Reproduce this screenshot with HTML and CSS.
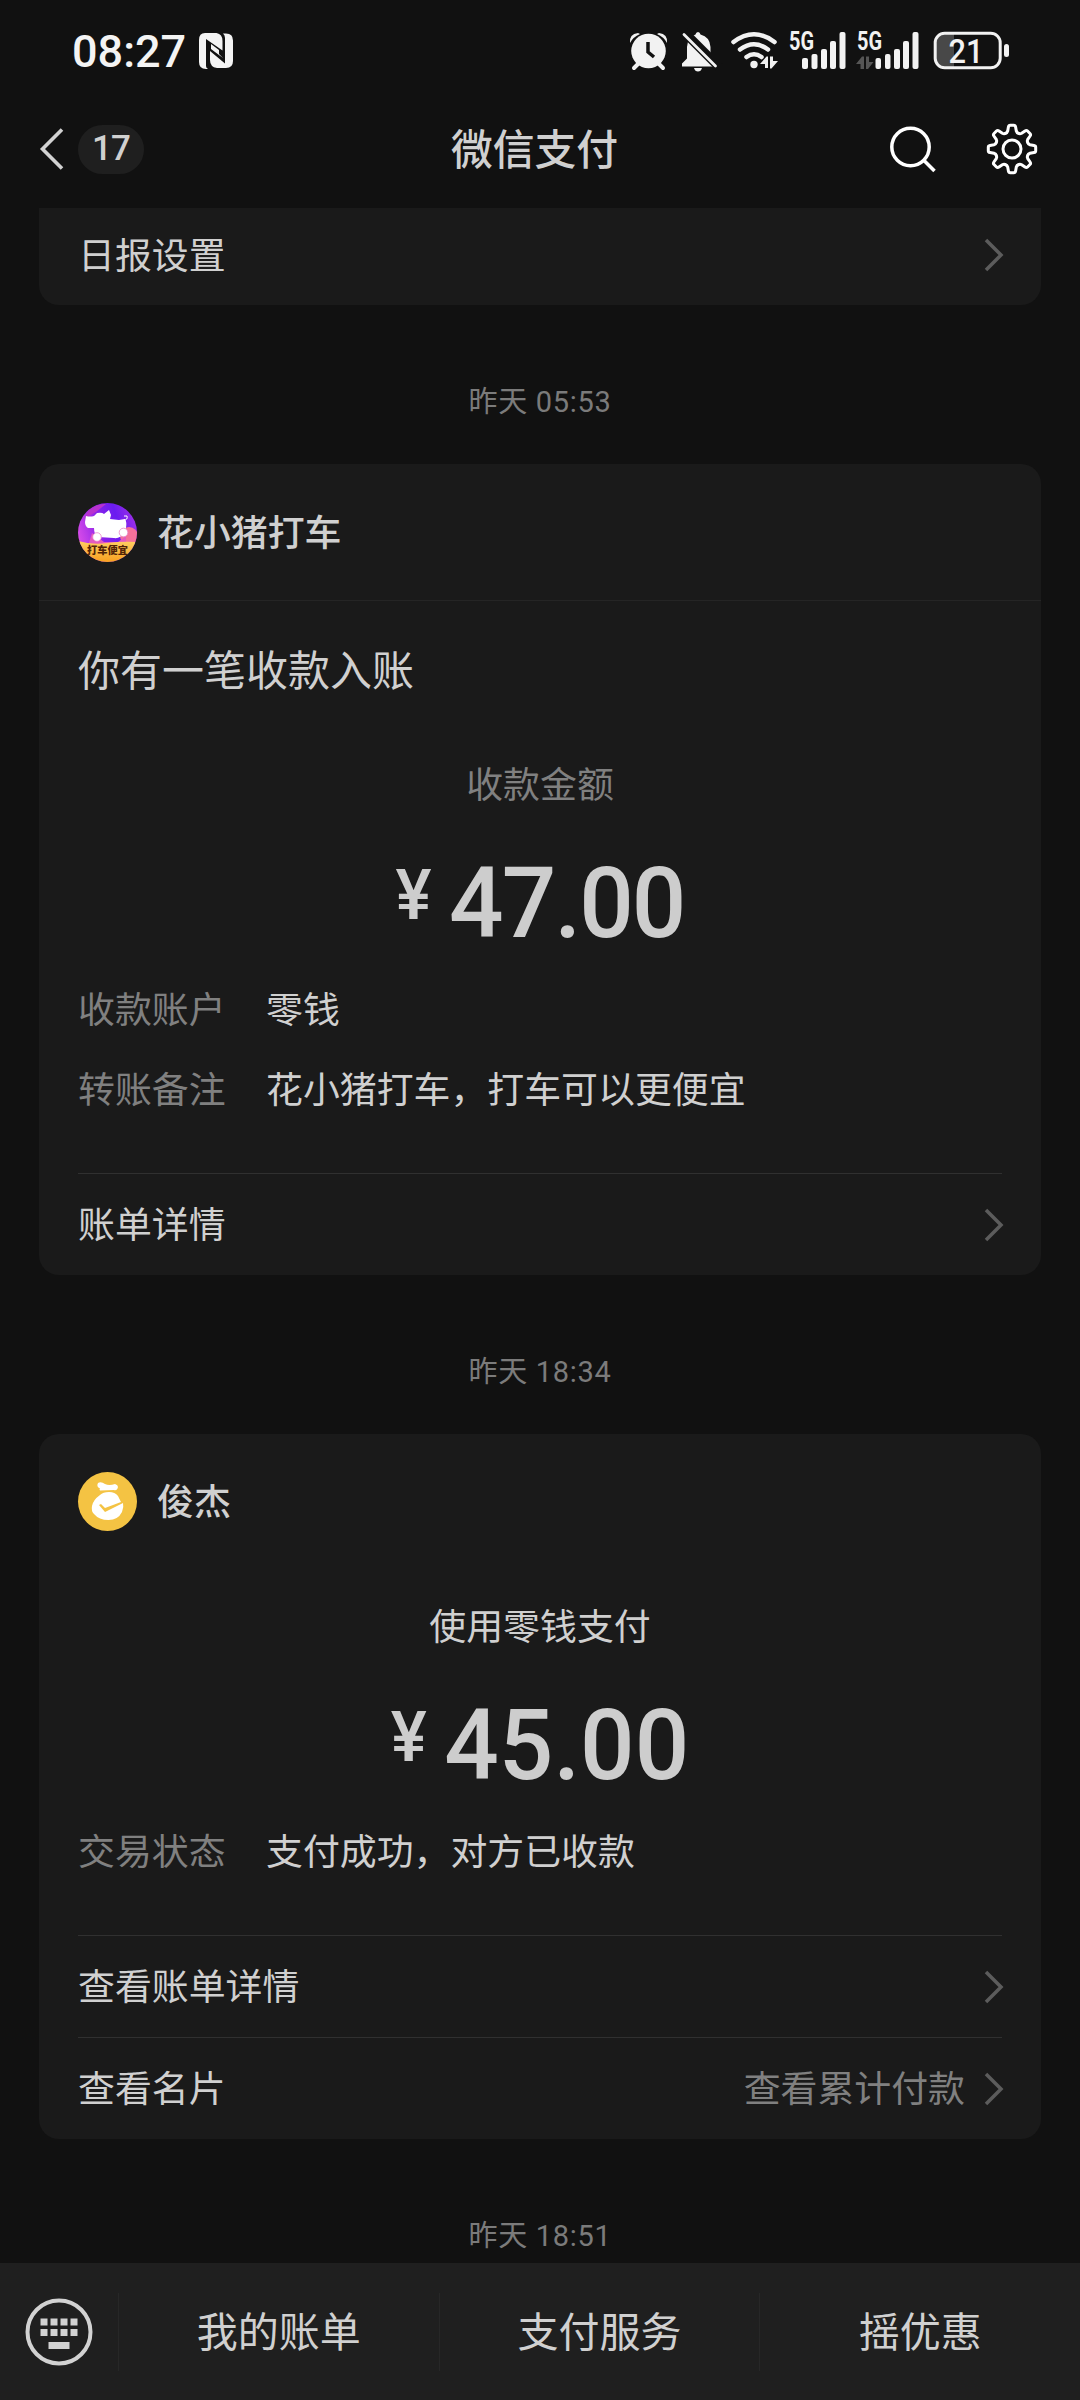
FILE: index.html
```html
<!DOCTYPE html>
<html lang="zh-CN">
<head>
<meta charset="utf-8">
<title>微信支付</title>
<link rel="stylesheet" href="styles.css">
</head>
<body>
<div class="screen">
  <div class="status">
    <span class="clock">08:27</span>
    <svg class="nfc" width="36" height="36" viewBox="198 34 36 36">
      <path fill="#f4f4f4" d="M205 34h11.500q6 1 6 8v9.500L206 40V67q0 2 2 3h-2q-7 0-7-7V41q0-7 6-7z"/>
      <path fill="#f4f4f4" d="M223 34.500h3q7 0 7 7V62q0 7-7 7h-9q-7-1-7-8v-9l15 12.500V39q0-3-2-4.500z"/>
      <path fill="#f4f4f4" d="M211 45l8 6v4l4 4-12-9z"/>
    </svg>
    <div class="status-icons">
      <svg width="42" height="40" viewBox="628 31 42 40">
        <g stroke="#f2f2f2" stroke-width="4" stroke-linecap="round"><path d="M638 64l-4 4M659 64l4 4"/></g>
        <path fill="#f2f2f2" d="M630 43q-1-9 8-10l2 1q-7 3-10 9zM667 43q1-9-8-10l-2 1q7 3 10 9z"/>
        <circle cx="648.500" cy="51" r="17.300" fill="#f2f2f2"/>
        <path d="M648 42v10l6 5" fill="none" stroke="#111" stroke-width="3.500"/>
      </svg>
      <svg width="38" height="40" viewBox="680 31 38 40">
        <path fill="#f2f2f2" d="M698 32q2 0 2.500 2.500Q710 37 710.500 47v8l6 8.500v3H682v-3l5-5V47q.500-10 8.500-12.500Q696 32 698 32zM694 68h8q-1 3.500-4 3.500t-4-3.500z"/>
        <path d="M684 32l35 35" stroke="#111" stroke-width="9"/>
        <path d="M684 34.500l31.500 31.500" stroke="#f2f2f2" stroke-width="2.800" stroke-linecap="round"/>
      </svg>
      <svg width="51" height="40" viewBox="728 31 51 40">
        <g fill="none" stroke="#f2f2f2" stroke-width="4.500" stroke-linecap="round"><path d="M733.500 42q20.500-15.500 41 0M740 49.500q14-10.500 28 0M746.500 57q7.500-5.500 15 0"/></g>
        <circle cx="754" cy="64.500" r="3.700" fill="#f2f2f2"/>
        <path fill="#f2f2f2" d="M760 64l6.500-7.500h1.500V68h-3v-4zM770 56.500h3V61h5l-6.500 7.500H770z"/>
      </svg>
      <svg width="57" height="40" viewBox="789 31 57 40">
        <text class="net" x="789" y="50" textLength="25" lengthAdjust="spacingAndGlyphs">5G</text>
        <g fill="#f2f2f2"><rect x="802" y="58" width="6" height="11" rx="2"/><rect x="811.500" y="54" width="6" height="15" rx="2"/><rect x="821" y="49" width="6" height="20" rx="2"/><rect x="830" y="41" width="6" height="28" rx="2"/><rect x="839.500" y="32" width="6" height="37" rx="2"/></g>
      </svg>
      <svg width="63" height="40" viewBox="856 31 63 40">
        <text class="net" x="857" y="50" textLength="25" lengthAdjust="spacingAndGlyphs">5G</text>
        <path fill="#555" d="M856 64l6-7.500h2V69h-3.500v-5zM866 56.500h3V62h4.500L868 69h-2z"/>
        <g fill="#f2f2f2"><rect x="875.500" y="58" width="5.500" height="11" rx="2"/><rect x="885" y="54" width="5.500" height="15" rx="2"/><rect x="894" y="49" width="6" height="20" rx="2"/><rect x="903" y="41" width="6" height="28" rx="2"/><rect x="912.500" y="32" width="6" height="37" rx="2"/></g>
      </svg>
      <svg width="81" height="40" viewBox="929 31 81 40">
        <path fill="#484848" d="M946 34h8v34h-8q-10 0-10-10V44q0-10 10-10z"/>
        <rect x="935.200" y="33.200" width="65" height="34.600" rx="9.500" fill="none" stroke="#f2f2f2" stroke-width="3"/>
        <rect x="1004" y="44" width="5" height="13" rx="2.500" fill="#f2f2f2"/>
        <text class="level" x="948.500" y="63" textLength="35" lengthAdjust="spacingAndGlyphs">21</text>
      </svg>
    </div>
  </div>

  <div class="nav">
    <div class="nav-left">
      <svg width="26" height="44" viewBox="0 0 26 44"><path d="M23 2.500L3.500 22 23 41.500" fill="none" stroke="#d2d2d2" stroke-width="3.600"/></svg>
      <span class="badge">17</span>
    </div>
    <div class="title">微信支付</div>
    <div class="nav-right">
      <svg width="48" height="52" viewBox="888 123 48 52"><circle cx="910.500" cy="147" r="18.700" fill="none" stroke="#fff" stroke-width="3.500"/><path d="M923.500 160l11 11" stroke="#fff" stroke-width="3.500"/></svg>
      <svg width="52" height="52" viewBox="-26 -26 52 52">
        <defs><path id="tooth" d="M-6.500-15.700Q-4.900-16-4.300-18L-3.600-22Q-3.300-23.700-1.700-23.700H1.700Q3.300-23.700 3.600-22L4.300-18Q4.900-16 6.500-15.700"/></defs>
        <g fill="none" stroke="#fff" stroke-width="3" stroke-linecap="round">
          <use href="#tooth"/><use href="#tooth" transform="rotate(45)"/><use href="#tooth" transform="rotate(90)"/><use href="#tooth" transform="rotate(135)"/><use href="#tooth" transform="rotate(180)"/><use href="#tooth" transform="rotate(225)"/><use href="#tooth" transform="rotate(270)"/><use href="#tooth" transform="rotate(315)"/>
          <circle r="9"/>
        </g>
      </svg>
    </div>
  </div>

  <div class="feed">
    <div class="card card-cut">
      <div class="link first"><span>日报设置</span><svg class="chev" width="20" height="34" viewBox="0 0 20 34"><path d="M3 2l15 15L3 32"/></svg></div>
    </div>

    <div class="time">昨天 05:53</div>

    <div class="card">
      <div class="head lined">
        <svg class="avatar" width="59" height="59" viewBox="0 0 59 59">
          <defs>
            <linearGradient id="sky" x1="0" y1="0.600" x2="1" y2="0.300"><stop offset="0" stop-color="#d94de8"/><stop offset="0.400" stop-color="#8a22ea"/><stop offset="0.700" stop-color="#6a1cf0"/><stop offset="1" stop-color="#a030e8"/></linearGradient>
            <linearGradient id="gold" x1="0" y1="0" x2="0" y2="1"><stop offset="0" stop-color="#ffd062"/><stop offset="1" stop-color="#f8a020"/></linearGradient>
            <clipPath id="round"><circle cx="29.500" cy="29.500" r="29.500"/></clipPath>
          </defs>
          <g clip-path="url(#round)">
            <rect width="59" height="59" fill="url(#sky)"/>
            <path fill="#b832cf" d="M10 8Q18 0 28 1L18 9 6 16z"/>
            <circle cx="51" cy="33" r="9" fill="#f4719a"/>
            <path fill="#e45bc0" d="M14 30l12 9h14l8-6v10H10z"/>
            <path fill="url(#gold)" d="M0 38q14 4 29 2t30-1v20H0z"/>
            <path fill="#fff" d="M8 13q4 1 8 0l3-3q5-1 7 1l5-4 2 5-1 4 9 1 6-1q2 3 1 9l-2 5q-4 6-10 5l-16-1q-4-2-4-9l-6 0q-3-2-3-6z"/>
            <path d="M46 17q4 0 3-4h-3" fill="none" stroke="#fff" stroke-width="1"/>
            <g fill="#fff" stroke="#e987ca" stroke-width="0.800"><circle cx="19" cy="34" r="4.300"/><circle cx="45.500" cy="29.500" r="4.300"/></g>
          </g>
          <text class="slogan" x="9" y="51" textLength="41">打车便宜</text>
        </svg>
        <span>花小猪打车</span>
      </div>
      <div class="heading">你有一笔收款入账</div>
      <div class="label dim after-heading">收款金额</div>
      <div class="amount"><span class="yen">¥</span><span class="sum tight">47.00</span></div>
      <dl class="info">
        <dt>收款账户</dt><dd>零钱</dd>
        <dt>转账备注</dt><dd>花小猪打车，打车可以更便宜</dd>
      </dl>
      <div class="links">
        <div class="link"><span>账单详情</span><svg class="chev" width="20" height="34" viewBox="0 0 20 34"><path d="M3 2l15 15L3 32"/></svg></div>
      </div>
    </div>

    <div class="time">昨天 18:34</div>

    <div class="card">
      <div class="head">
        <svg class="avatar" width="59" height="59" viewBox="0 0 59 59">
          <circle cx="29.500" cy="29.500" r="29.500" fill="#f4c343"/>
          <path fill="#fff" d="M20 11q3-2 7 1 4 2 10 0 3 1 3 3-1 4-4 3l-14 0.500q-1-1 0-2-4-2-2-5.500z"/>
          <path fill="#fff" d="M22 23q3-3 9-3t9 4l3 6-16 6-4-4-2 1 6 7 18-9q1 4-1 9-4 8-13.500 8T16 42q-3-3-2-8 1-6 8-11z"/>
        </svg>
        <span>俊杰</span>
      </div>
      <div class="label after-head">使用零钱支付</div>
      <div class="amount"><span class="yen">¥</span><span class="sum">45.00</span></div>
      <dl class="info">
        <dt>交易状态</dt><dd>支付成功，对方已收款</dd>
      </dl>
      <div class="links">
        <div class="link"><span>查看账单详情</span><svg class="chev" width="20" height="34" viewBox="0 0 20 34"><path d="M3 2l15 15L3 32"/></svg></div>
        <div class="link"><span>查看名片</span><span class="extra">查看累计付款</span><svg class="chev" width="20" height="34" viewBox="0 0 20 34"><path d="M3 2l15 15L3 32"/></svg></div>
      </div>
    </div>

    <div class="time">昨天 18:51</div>
  </div>

  <div class="menu">
    <div class="keyboard">
      <svg width="68" height="70" viewBox="0 0 68 70">
        <circle cx="34" cy="35" r="31.500" fill="none" stroke="#d2d2d2" stroke-width="4"/>
        <g fill="#d2d2d2"><path d="M15.500 21.500h7v7h-7zM25.500 21.500h7v7h-7zM35.500 21.500h7v7h-7zM45.500 21.500h7v7h-7zM15.500 32h7v7h-7zM25.500 32h7v7h-7zM35.500 32h7v7h-7zM45.500 32h7v7h-7zM23.500 45h21v7h-21z"/></g>
      </svg>
    </div>
    <div class="item">我的账单</div>
    <div class="item">支付服务</div>
    <div class="item">摇优惠</div>
  </div>
</div>
</body>
</html>
```
FILE: styles.css
```css
* { box-sizing: border-box; }
body {
  margin: 0;
  background: #111;
  color: #d0d0d0;
  font-family: Roboto, "Noto Sans CJK SC", sans-serif;
  font-size: 36.9px;
}
svg { display: block; flex: none; overflow: visible; }
.screen {
  width: 1080px;
  height: 2400px;
  display: flex;
  flex-direction: column;
  overflow: hidden;
}

/* system status bar */
.status {
  height: 102px;
  display: flex;
  align-items: center;
  padding: 0 70px 0 72px;
}
.clock {
  width: 126px;
  font-size: 45px;
  font-weight: 500;
  color: #f4f4f4;
  white-space: nowrap;
}
.status-icons { display: flex; gap: 10px; margin-left: auto; }
.net { font-size: 25px; font-weight: 700; fill: #f2f2f2; }
.level { font-size: 34px; font-weight: 500; fill: #f2f2f2; }

/* title bar */
.nav {
  height: 106px;
  padding: 0 42px 12px 39px;
  display: grid;
  grid-template-columns: 1fr auto 1fr;
  align-items: center;
}
.nav-left { display: flex; align-items: center; gap: 13px; }
.badge {
  width: 66px;
  height: 49px;
  border-radius: 25px;
  background: #1f1f1f;
  font-size: 35px;
  font-weight: 500;
  letter-spacing: -1px;
  line-height: 48px;
  text-align: center;
}
.title {
  font-size: 41.8px;
  font-weight: 500;
  line-height: 60px;
  padding-top: 3px;
  margin-right: 8px;
}
.nav-right { display: flex; justify-content: flex-end; align-items: center; gap: 50px; }

/* message feed */
.feed { flex: 1; min-height: 0; overflow: hidden; padding: 0 39px; }
.card { background: #1a1a1a; border-radius: 20px; }
.card-cut { border-radius: 0 0 20px 20px; padding: 0 39px; }
.time {
  padding: 77px 0 42px;
  font-size: 29px;
  line-height: 40px;
  letter-spacing: 0.7px;
  color: #7b7b7b;
  text-align: center;
}
.head {
  height: 136px;
  padding: 0 39px 1px;
  display: flex;
  align-items: center;
  gap: 20px;
  font-weight: 500;
  line-height: 50px;
}
.head span, .link span { padding-top: 3px; }
.head.lined { height: 137px; padding-bottom: 0; border-bottom: 1px solid #252525; }
.slogan { font-size: 10.200px; font-weight: 900; fill: #512407; }
.heading { padding: 41px 39px 0; font-size: 42px; line-height: 60px; }
.label { line-height: 50px; text-align: center; }
.dim { color: #808080; }
.after-heading { margin-top: 59px; }
.after-head { margin-top: 33px; }
.amount {
  margin-top: 42px;
  height: 100px;
  display: flex;
  justify-content: center;
  align-items: flex-start;
  gap: 18px;
  font-weight: 500;
  color: #cdcdcd;
  transform: scaleX(0.97);
}
.sum { font-size: 99px; line-height: 100px; }
.sum.tight { letter-spacing: -2px; }
.yen { font-size: 70px; line-height: 85px; }
.info {
  margin: 33px 39px 0;
  display: grid;
  grid-template-columns: 188px 1fr;
  row-gap: 30px;
  line-height: 50px;
}
.info dt { color: #808080; }
.info dd { margin: 0; }
.links { margin: 57px 39px 0; }
.link {
  height: 102px;
  border-top: 1px solid #303030;
  display: flex;
  align-items: center;
  justify-content: space-between;
  line-height: 50px;
}
.link.first { height: 97px; padding-bottom: 3px; border-top: 0; }
.extra { margin-left: auto; margin-right: 18px; color: #808080; }
.chev { margin-right: -1px; }
.chev path { fill: none; stroke: #5c5c5c; stroke-width: 3.500; }

/* bottom menu */
.menu {
  height: 137px;
  background: #1f1f1f;
  display: grid;
  grid-template-columns: 118px 1fr 1fr 1fr;
  align-items: center;
}
.keyboard { padding-left: 25px; }
.item {
  height: 78px;
  border-left: 1px solid #272727;
  font-size: 41px;
  line-height: 81px;
  text-align: center;
}
```
